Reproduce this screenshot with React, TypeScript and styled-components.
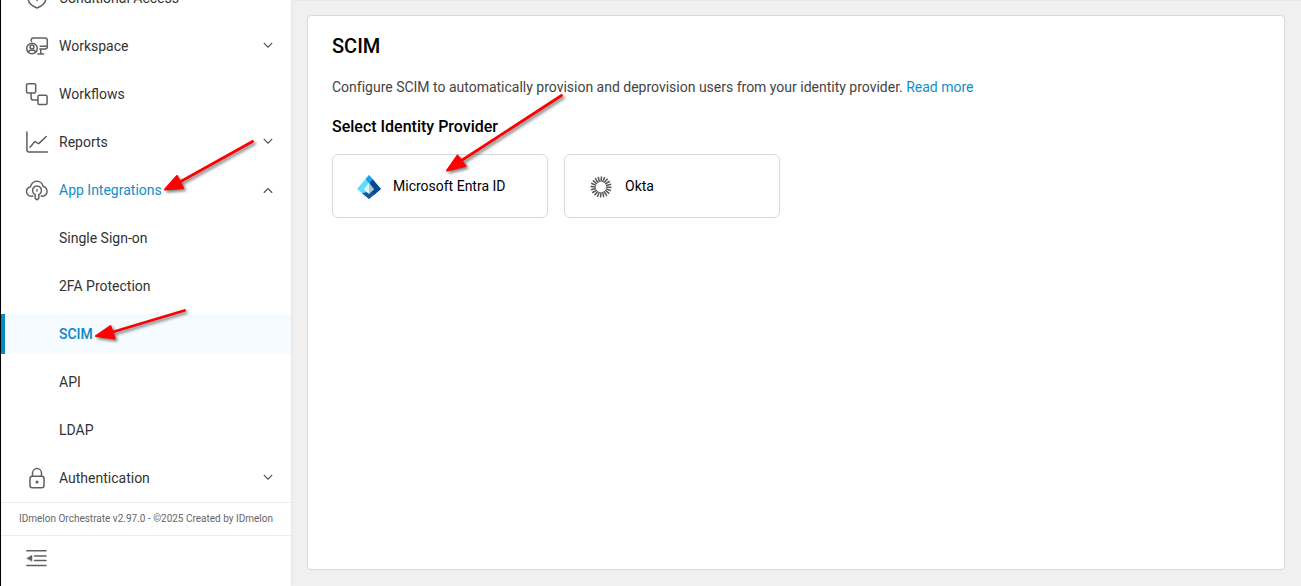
import React from 'react';
import styled, { createGlobalStyle, css } from 'styled-components';

const GlobalStyle = createGlobalStyle`
  * { box-sizing: border-box; }
  body { margin: 0; font-family: Roboto, sans-serif; font-size: 14px; background: #f0f0f0; overflow: hidden; }
`;

const Page = styled.div`
  position: relative;
  display: flex;
  height: 586px;
  overflow: hidden;
  border-left: 1px solid #000;
`;

const Sidebar = styled.aside`
  display: flex;
  flex-direction: column;
  width: 290px;
  flex: none;
  background: #fff;
  box-shadow: 0 0 3px rgba(0, 0, 0, 0.1);
`;

const Nav = styled.nav`
  height: 502px;
  flex: none;
  display: flex;
  flex-direction: column;
  justify-content: flex-end;
  gap: 8px;
  padding-bottom: 4px;
  overflow: hidden;
`;

const NavItem = styled.a<{ $active?: boolean; $open?: boolean }>`
  display: flex;
  align-items: center;
  flex: none;
  height: 40px;
  padding: 0 17px 0 20px;
  border-left: 4px solid transparent;
  color: #333;
  ${p => p.$open && css`color: #0f8fc9;`}
  ${p => p.$active && css`
    color: #0a88c2;
    font-weight: 500;
    background: #f5fbff;
    border-left-color: #0a88c2;
  `}
`;

const IconSlot = styled.span`
  display: flex;
  width: 24px;
  height: 24px;
  margin-right: 10px;
  color: #5f6062;
`;

const NavLabel = styled.span`
  flex: 1;
  line-height: 20px;
`;

const LineIcon = styled.svg`
  width: 24px;
  height: 24px;
  fill: none;
  stroke: currentColor;
  stroke-width: 1.5;
  stroke-linecap: round;
  stroke-linejoin: round;
`;

const ChevronIcon = styled.svg<{ $up?: boolean }>`
  width: 12px;
  height: 12px;
  fill: none;
  stroke: #555;
  stroke-width: 1.3;
  transform: ${p => (p.$up ? 'translateY(0.5px) rotate(180deg)' : 'translateY(-0.8px)')};
`;

const Version = styled.div`
  height: 34px;
  flex: none;
  border-top: 1px solid #ebebeb;
  border-bottom: 1px solid #ebebeb;
  font-size: 10px;
  line-height: 32px;
  padding-left: 18px;
  color: #666;
  white-space: nowrap;
`;

const CollapseBar = styled.div`
  display: flex;
  padding: 10px 24px;
  color: #5f6062;
`;

const Main = styled.main`
  flex: 1;
  display: flex;
  padding: 14px 16px 16px;
  border-top: 1px solid #e8e8e8;
`;

const Panel = styled.section`
  flex: 1;
  background: #fff;
  border: 1px solid #d9d9d9;
  border-radius: 4px;
  padding: 18px 24px;
`;

const Title = styled.h1`
  margin: 0;
  font-size: 20px;
  line-height: 24px;
  font-weight: 500;
  color: #000;
`;

const Description = styled.p`
  margin: 19px 0 0;
  line-height: 20px;
  letter-spacing: -0.006px;
  color: #444;
`;

const Link = styled.a`
  color: #0f8fc9;
`;

const Subtitle = styled.h2`
  margin: 20px 0 0;
  font-size: 16px;
  line-height: 20px;
  font-weight: 500;
  color: #000;
`;

const Providers = styled.div`
  display: flex;
  gap: 16px;
  margin-top: 17px;
`;

const ProviderCard = styled.button`
  display: flex;
  align-items: center;
  gap: 12px;
  width: 216px;
  height: 64px;
  padding: 0 24px;
  border: 1px solid #d9d9d9;
  border-radius: 6px;
  background: #fff;
  color: #000;
  font: 14px Roboto, sans-serif;
`;

const ProviderName = styled.span`
  line-height: 20px;
  margin-top: -1px;
`;

const ProviderIcon = styled.svg`
  width: 24px;
  height: 24px;
  margin-top: 1px;
`;

const Annotations = styled.svg`
  position: absolute;
  top: 0;
  left: -1px;
  width: 1301px;
  height: 586px;
  pointer-events: none;
  filter: drop-shadow(2px 2px 1.5px rgba(0, 0, 0, 0.5));
`;

const icons: Record<string, React.ReactNode> = {
  shield: <path d="M12 2.2 3 5.6v6.2c0 5 3.8 8.2 9 10.2 5.2-2 9-5.2 9-10.200V5.6ZM12 9v5.500" />,
  workspace: (
    <>
      <path d="M6.200 7.300V6.200Q6.200 4 8.400 4H20Q22.300 4 22.300 6.200V12.800Q22.300 15 20 15H14.800M15.300 12.200H22M13 20H18.500M15.800 18.500Q15.800 16.500 15.800 15.300M15.800 15.500V19.800" />
      <circle cx="7" cy="14.500" r="5.300" />
      <circle cx="7" cy="12.900" r="1.900" />
      <path d="M3.800 18.200v-.4q0-1.500 1.500-1.500h3.400q1.500 0 1.500 1.500v.4" />
    </>
  ),
  workflows: (
    <>
      <rect x="1.500" y="1.700" width="9.200" height="9.200" rx="1.500" />
      <rect x="12.900" y="13.200" width="9.200" height="9.200" rx="1.500" />
      <path d="M6.100 11v5q0 1.900 1.900 1.900h4.800" />
    </>
  ),
  reports: (
    <path d="M1.900 2v17.800q0 2.100 2.100 2.100h18.300M5 17.200l4.200-5q.8-1 1.800-.2l1.600 1.200q1 .7 1.900-.3L21.200 6.500" />
  ),
  cloud: (
    <>
      <path d="M7.800 18A4.800 4.800 0 1 1 5.600 8.700A6.400 6.400 0 0 1 18.200 8.500A4.900 4.900 0 1 1 16.200 18.100" />
      <path d="M10.200 16.600A4.500 4.500 0 1 1 13.800 16.600V20.200Q12 23.200 10.200 20.200Z" />
      <path d="M12 11.800v1.300" />
    </>
  ),
  lock: (
    <>
      <rect x="5" y="10.300" width="14" height="11.500" rx="2.300" />
      <path d="M7.500 10V7.100a4.500 4.500 0 0 1 9 0V10" />
      <circle cx="12" cy="16" r="0.800" fill="currentColor" />
    </>
  ),
};

interface Entry {
  label: string;
  icon?: string;
  chevron?: 'up' | 'down';
  active?: boolean;
  open?: boolean;
}

const entries: Entry[] = [
  { label: 'Conditional Access', icon: 'shield' },
  { label: 'Workspace', icon: 'workspace', chevron: 'down' },
  { label: 'Workflows', icon: 'workflows' },
  { label: 'Reports', icon: 'reports', chevron: 'down' },
  { label: 'App Integrations', icon: 'cloud', chevron: 'up', open: true },
  { label: 'Single Sign-on' },
  { label: '2FA Protection' },
  { label: 'SCIM', active: true },
  { label: 'API' },
  { label: 'LDAP' },
  { label: 'Authentication', icon: 'lock', chevron: 'down' },
];

const EntraLogo = () => (
  <ProviderIcon viewBox="0 0 24 24">
    <path d="M12 0 24 14 12 24 0 14Z" fill="#5ddcff" />
    <path d="M12 4 15.500 4 24 14 17 20 12 16Z" fill="#074793" />
    <path d="M12 0 15.800 4.500 12 8.500 8.700 4Z" fill="#0fa6e8" />
    <path d="M5 18.200 12 16.500 19 18.200 12 24Z" fill="#1856a0" />
    <path d="M12 7.500 6.800 14.500 12 19Z" fill="#e4f4f7" />
    <path d="M12 7.500 17.200 14.500 12 19Z" fill="#a5cbd0" />
  </ProviderIcon>
);

const OktaLogo = () => (
  <ProviderIcon viewBox="0 0 24 24">
    {Array.from({ length: 20 }, (_, i) => (
      <path key={i} d="M12.500 1.500 12 6.800" stroke="#55565a" strokeWidth="1.500" transform={`rotate(${i * 18} 12 12)`} />
    ))}
  </ProviderIcon>
);

export default function App() {
  return (
    <Page>
      <GlobalStyle />
      <Sidebar>
        <Nav>
          {entries.map(e => (
            <NavItem key={e.label} $active={e.active} $open={e.open}>
              <IconSlot>{e.icon && <LineIcon viewBox="0 0 24 24">{icons[e.icon]}</LineIcon>}</IconSlot>
              <NavLabel>{e.label}</NavLabel>
              {e.chevron && (
                <ChevronIcon viewBox="0 0 12 12" $up={e.chevron === 'up'}>
                  <path d="M1.800 3.700 6 7.900 10.200 3.700" />
                </ChevronIcon>
              )}
            </NavItem>
          ))}
        </Nav>
        <Version>IDmelon Orchestrate v2.97.0 - ©2025 Created by IDmelon</Version>
        <CollapseBar>
          <LineIcon viewBox="0 0 24 24">
            <path d="M1.800 4.800h19.200M9.500 10h11.500M9.500 14.600h11.500M1.800 19.500h19.200" />
            <path d="M2 12.200 7 9.300v5.800Z" fill="currentColor" strokeWidth="0.500" />
          </LineIcon>
        </CollapseBar>
      </Sidebar>
      <Main>
        <Panel>
          <Title>SCIM</Title>
          <Description>
            Configure SCIM to automatically provision and deprovision users from your identity provider. <Link>Read more</Link>
          </Description>
          <Subtitle>Select Identity Provider</Subtitle>
          <Providers>
            <ProviderCard>
              <EntraLogo />
              <ProviderName>Microsoft Entra ID</ProviderName>
            </ProviderCard>
            <ProviderCard>
              <OktaLogo />
              <ProviderName>Okta</ProviderName>
            </ProviderCard>
          </Providers>
        </Panel>
      </Main>
      <Annotations viewBox="0 0 1301 586" fill="#f00" stroke="#f00" strokeLinecap="round" strokeLinejoin="round">
        <path d="M252.500 141.500 178 183M184.500 310.500 111 332.500M561.500 95.500 460 161.500" strokeWidth="2.800" />
        <path d="M165 189.500 177 176 183 188ZM96 336 110.500 326 114.500 338.500ZM447 170.500 457.500 155.500 465.500 166Z" strokeWidth="2" />
      </Annotations>
    </Page>
  );
}
